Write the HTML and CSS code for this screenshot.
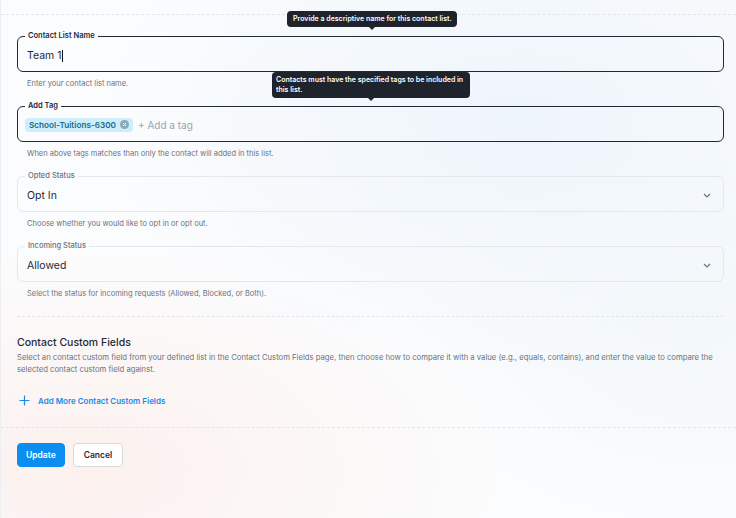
FILE: index.html
```html
<!DOCTYPE html>
<html lang="en">
  <head>
    <meta charset="UTF-8" />
    <meta name="viewport" content="width=device-width, initial-scale=1.0" />
    <title>Edit Contact List</title>
    <link rel="stylesheet" href="styles.css">
  </head>
  <body>
    <div class="page">
      <div class="top-rule"></div>

      <form class="list-form">
        <div class="group">
          <div class="tooltip tip-name">Provide a descriptive name for this contact list.</div>
          <fieldset class="field active">
            <legend>Contact List Name</legend>
            <div class="control"><span class="value">Team 1</span><span class="caret"></span></div>
          </fieldset>
          <p class="help">Enter your contact list name.</p>
        </div>

        <div class="group">
          <div class="tooltip tip-tag">Contacts must have the specified tags to be included in this list.</div>
          <fieldset class="field active">
            <legend>Add Tag</legend>
            <div class="control tags">
              <span class="chip">School-Tuitions-6300
                <svg width="9" height="9" viewBox="0 0 10 10"><circle cx="5" cy="5" r="5" fill="#8aa9b8"/><path d="M3.3 3.3l3.4 3.4M6.7 3.3l-3.4 3.4" stroke="#fff" stroke-width="1.1"/></svg>
              </span>
              <span class="placeholder">+ Add a tag</span>
            </div>
          </fieldset>
          <p class="help">When above tags matches than only the contact will added in this list.</p>
        </div>

        <div class="group">
          <fieldset class="field">
            <legend>Opted Status</legend>
            <div class="control select"><span class="value">Opt In</span>
              <svg class="chevron" width="8" height="5" viewBox="0 0 8 5"><path d="M1 1l3 3 3-3" fill="none" stroke="#6b7280" stroke-width="1.2"/></svg>
            </div>
          </fieldset>
          <p class="help">Choose whether you would like to opt in or opt out.</p>
        </div>

        <div class="group">
          <fieldset class="field">
            <legend>Incoming Status</legend>
            <div class="control select"><span class="value">Allowed</span>
              <svg class="chevron" width="8" height="5" viewBox="0 0 8 5"><path d="M1 1l3 3 3-3" fill="none" stroke="#6b7280" stroke-width="1.2"/></svg>
            </div>
          </fieldset>
          <p class="help">Select the status for incoming requests (Allowed, Blocked, or Both).</p>
        </div>

        <div class="section">
          <h3>Contact Custom Fields</h3>
          <p class="desc">Select an contact custom field from your defined list in the Contact Custom Fields page, then choose how to compare it with a value (e.g., equals, contains), and enter the value to compare the selected contact custom field against.</p>
          <a class="add-more">
            <svg width="11" height="11" viewBox="0 0 11 11"><path d="M5.5 0.5v10M0.5 5.5h10" stroke="#1a8ae6" stroke-width="1.2"/></svg>
            Add More Contact Custom Fields
          </a>
        </div>

        <div class="actions">
          <button type="button" class="btn primary">Update</button>
          <button type="button" class="btn">Cancel</button>
        </div>
      </form>
    </div>
  </body>
</html>
```

FILE: styles.css
```css
html,
body {
  margin: 0;
  height: 100%;
}
body {
  font-family: Inter, "Noto Sans", sans-serif;
  color: #1f2937;
  background:
    radial-gradient(ellipse 420px 260px at 520px 120px, #eef5fb 0%, rgba(238, 245, 251, 0) 100%),
    radial-gradient(ellipse 420px 220px at 80px 470px, #fcf1ee 0%, rgba(252, 241, 238, 0) 100%),
    radial-gradient(ellipse 300px 200px at 700px 330px, #f3f8fa 0%, rgba(243, 248, 250, 0) 100%),
    #fbfcfd;
}
.page {
  height: 100%;
  border-left: 1px solid #eceef2;
  box-sizing: border-box;
}
.top-rule {
  height: 14px;
  border-bottom: 1px dashed #e3e6ea;
}
.list-form {
  padding: 16px 12px 0 16px;
}
.group {
  position: relative;
}
.field {
  margin: 0;
  padding: 0 9px;
  border: 1px solid #e5e7eb;
  border-radius: 6px;
  min-width: 0;
}
.field.active {
  border-color: #1f2937;
}
legend {
  padding: 0 3px;
  margin-left: -2px;
  font-size: 7.5px;
  line-height: 10px;
  font-weight: 500;
  color: #6b7280;
}
.field.active legend {
  color: #1f2937;
  font-weight: 600;
}
.control {
  height: 30px;
  display: flex;
  align-items: center;
  padding-bottom: 1px;
  box-sizing: border-box;
}
.control.tags {
  padding-bottom: 3px;
}
.value {
  font-size: 10.5px;
  color: #1f2937;
}
.caret {
  display: inline-block;
  width: 1px;
  height: 12px;
  background: #111;
}
.select {
  justify-content: space-between;
}
.chevron {
  margin-right: 3px;
}
.chip {
  display: inline-flex;
  align-items: center;
  gap: 4px;
  height: 14px;
  padding: 0 4px;
  margin-left: -2px;
  border-radius: 4px;
  background: #cdeefa;
  color: #1d6a8c;
  font-size: 8.2px;
  font-weight: 600;
}
.placeholder {
  margin-left: 5px;
  font-size: 10px;
  color: #9ca3af;
}
.help {
  margin: 7px 0 12px 10px;
  font-size: 7.5px;
  line-height: 10px;
  color: #6b7280;
}
.tooltip {
  position: absolute;
  z-index: 2;
  background: #1e232c;
  color: #fff;
  font-size: 7px;
  font-weight: 600;
  line-height: 10px;
  padding: 3px 5px;
  border-radius: 4px;
  box-sizing: border-box;
}
.tooltip::after {
  content: "";
  position: absolute;
  bottom: -3px;
  left: 50%;
  margin-left: -3px;
  border: 3px solid transparent;
  border-bottom: 0;
  border-top-color: #1e232c;
}
.tip-name {
  left: 270px;
  top: -20px;
  width: 170px;
  padding: 3px 5px 3px 6px;
}
.tip-tag {
  left: 255px;
  top: -29px;
  width: 198px;
  padding: 3px 5px 3px 4px;
}
.tip-tag::after {
  left: 99px;
}
.section {
  border-top: 1px dashed #e3e6ea;
  margin-top: 17px;
  padding-top: 19px;
}
.section h3 {
  margin: 0;
  font-size: 10.5px;
  line-height: 14px;
  font-weight: 500;
  color: #1f2937;
}
.desc {
  margin: 2px 0 0;
  font-size: 7.7px;
  line-height: 12px;
  color: #6b7280;
}
.add-more {
  display: inline-flex;
  align-items: center;
  gap: 8px;
  margin: 19px 0 0 2px;
  font-size: 8px;
  font-weight: 600;
  color: #1a8ae6;
  cursor: pointer;
}
.actions {
  margin: 17px -12px 0 -16px;
  padding: 15px 0 0 16px;
  border-top: 1px dashed #e3e6ea;
  display: flex;
  gap: 8px;
}
.btn {
  height: 24px;
  padding: 0 10px;
  border: 1px solid #d9d9d9;
  border-radius: 4px;
  background: #fff;
  color: #1f2937;
  font-family: inherit;
  font-size: 8.5px;
  font-weight: 600;
  cursor: pointer;
}
.btn.primary {
  background: #0c8ef0;
  border-color: #0c8ef0;
  color: #fff;
  padding: 0 8px;
}
```
